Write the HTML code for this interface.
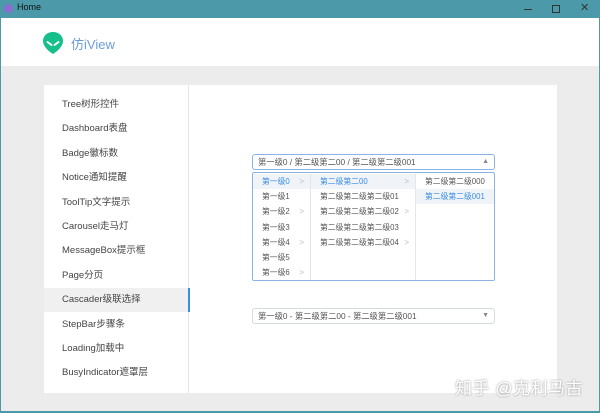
<!DOCTYPE html>
<html><head><meta charset="utf-8"><style>
*{margin:0;padding:0;box-sizing:border-box}
body{width:600px;height:413px;overflow:hidden;background:#4c9aa9;font-family:"Liberation Sans","Noto Sans CJK SC",sans-serif;position:relative}
.win{position:absolute;left:1px;top:18px;width:598px;height:393px;background:#ececec}
.hdr{position:absolute;left:0;top:0;width:598px;height:48px;background:#fff}
.panel{position:absolute;left:43px;top:67px;width:513px;height:308px;background:#fff}
.side{position:absolute;left:0;top:0;width:145px;height:308px;border-right:1px solid #e6e6e6}
.it{position:absolute;left:0;width:145px;height:24px;line-height:24px;padding-left:18px;font-size:9.5px;color:#444}
.act{background:#f0f0f0}
.act:after{content:"";position:absolute;right:-1px;top:0;width:2px;height:24px;background:#3a8ee6}
.sel{position:absolute;height:16px;border:1px solid #d6dbe2;border-radius:3px;font-size:8.3px;color:#555;line-height:14px;padding-left:5px;background:#fff}
.abs{position:absolute}
.col div{height:15.2px;line-height:15.2px;font-size:7.8px;color:#555;padding-left:9px;position:relative;white-space:nowrap}
.col .b{color:#3a8ee6}
.col .h{background:#f0f3f7}
.ar{position:absolute;right:6px;color:#bbb;font-size:8px}
</style></head><body>
<div class="abs" style="left:4px;top:4px;width:9px;height:9px;border-radius:50%;background:#8a6fd0"></div>
<div class="abs" style="left:17px;top:2px;font-size:9px;color:#111">Home</div>
<div class="abs" style="left:524px;top:9px;width:8px;height:1px;background:#333"></div>
<div class="abs" style="left:552px;top:5px;width:8px;height:8px;border:1px solid #333"></div>
<div class="abs" style="left:580px;top:1px;font-size:11px;color:#333">✕</div>
<div class="win">
 <div class="hdr">
  <svg class="abs" style="left:42px;top:14px" width="20" height="22" viewBox="0 0 20 22"><path d="M10 0C4 0 0 4 0 9c0 5 5 10 10 13 5-3 10-8 10-13 0-5-4-9-10-9z" fill="#16c08a"/><path d="M4.5 10l4 3M15.5 10l-4 3" stroke="#fff" stroke-width="2" stroke-linecap="round"/></svg>
  <div class="abs" style="left:70px;top:16px;font-size:13px;color:#6b9be0">仿iView</div>
 </div>
 <div class="panel">
  <div class="side">
   <div class="it" style="top:8px">Tree树形控件</div>
   <div class="it" style="top:32px">Dashboard表盘</div>
   <div class="it" style="top:57px">Badge徽标数</div>
   <div class="it" style="top:81px">Notice通知提醒</div>
   <div class="it" style="top:106px">ToolTip文字提示</div>
   <div class="it" style="top:130px">Carousel走马灯</div>
   <div class="it" style="top:154px">MessageBox提示框</div>
   <div class="it" style="top:179px">Page分页</div>
   <div class="it act" style="top:203px">Cascader级联选择</div>
   <div class="it" style="top:228px">StepBar步骤条</div>
   <div class="it" style="top:252px">Loading加载中</div>
   <div class="it" style="top:276px">BusyIndicator遮罩层</div>
  </div>
  <div class="sel" style="left:208px;top:69px;width:243px;border-color:#8ab4e6">第一级0 / 第二级第二00 / 第二级第二级001<span class="abs" style="right:5px;top:0;color:#888;font-size:7px">▲</span></div>
  <div class="abs" style="left:208px;top:87px;width:243px;height:109px;border:1px solid #8ab4e6;background:#fff;border-radius:2px">
   <div class="abs col" style="left:0;top:1px;width:58px;height:106px;border-right:1px solid #e6e6e6">
    <div class="b h">第一级0<span class="ar">&gt;</span></div><div>第一级1</div><div>第一级2<span class="ar">&gt;</span></div><div>第一级3</div><div>第一级4<span class="ar">&gt;</span></div><div>第一级5</div><div>第一级6<span class="ar">&gt;</span></div>
   </div>
   <div class="abs col" style="left:58px;top:1px;width:105px;height:106px;border-right:1px solid #e6e6e6">
    <div class="b h">第二级第二00<span class="ar">&gt;</span></div><div>第二级第二级第二级01</div><div>第二级第二级第二级02<span class="ar">&gt;</span></div><div>第二级第二级第二级03</div><div>第二级第二级第二级04<span class="ar">&gt;</span></div>
   </div>
   <div class="abs col" style="left:163px;top:1px;width:78px">
    <div>第二级第二级000</div><div class="b h">第二级第二级001</div>
   </div>
  </div>
  <div class="sel" style="left:208px;top:223px;width:243px">第一级0 - 第二级第二00 - 第二级第二级001<span class="abs" style="right:5px;top:0;color:#888;font-size:7px">▼</span></div>
 </div>
 <div class="abs" style="left:454px;top:356px;font-size:17px;color:#fff;text-shadow:0 0 2px #888;letter-spacing:0.5px">知乎 @克利马古</div>
</div>
</body></html>
